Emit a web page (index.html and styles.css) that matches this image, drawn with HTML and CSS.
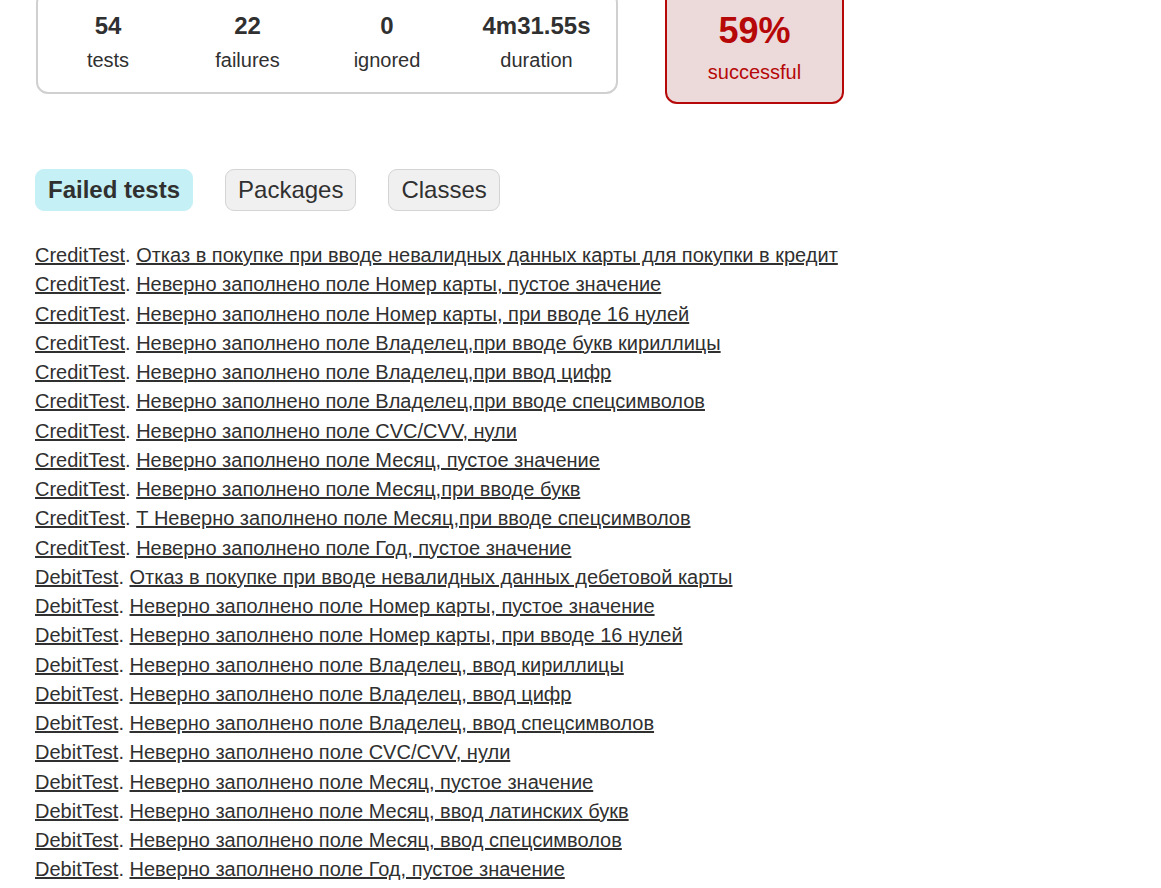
FILE: index.html
```html
<!DOCTYPE html>
<html lang="ru">
<head>
<meta charset="utf-8">
<title>Test results</title>
<link rel="stylesheet" href="styles.css">
</head>
<body>
<div class="content">
  <div class="summary">
    <div class="summary-group">
      <div class="info-box w1"><div class="counter">54</div><p>tests</p></div>
      <div class="info-box w2"><div class="counter">22</div><p>failures</p></div>
      <div class="info-box w3"><div class="counter">0</div><p>ignored</p></div>
      <div class="info-box w4"><div class="counter">4m31.55s</div><p>duration</p></div>
    </div>
    <div class="info-box success-rate failures">
      <div class="percent">59%</div>
      <p>successful</p>
    </div>
  </div>

  <ul class="tab-links">
    <li class="selected"><a href="#"><h2>Failed tests</h2></a></li>
    <li><a href="#">Packages</a></li>
    <li><a href="#">Classes</a></li>
  </ul>

  <ul class="link-list">
    <li><a href="#">CreditTest</a>. <a href="#">Отказ в покупке при вводе невалидных данных карты для покупки в кредит</a></li>
    <li><a href="#">CreditTest</a>. <a href="#">Неверно заполнено поле Номер карты, пустое значение</a></li>
    <li><a href="#">CreditTest</a>. <a href="#">Неверно заполнено поле Номер карты, при вводе 16 нулей</a></li>
    <li><a href="#">CreditTest</a>. <a href="#">Неверно заполнено поле Владелец,при вводе букв кириллицы</a></li>
    <li><a href="#">CreditTest</a>. <a href="#">Неверно заполнено поле Владелец,при ввод цифр</a></li>
    <li><a href="#">CreditTest</a>. <a href="#">Неверно заполнено поле Владелец,при вводе спецсимволов</a></li>
    <li><a href="#">CreditTest</a>. <a href="#">Неверно заполнено поле CVC/CVV, нули</a></li>
    <li><a href="#">CreditTest</a>. <a href="#">Неверно заполнено поле Месяц, пустое значение</a></li>
    <li><a href="#">CreditTest</a>. <a href="#">Неверно заполнено поле Месяц,при вводе букв</a></li>
    <li><a href="#">CreditTest</a>. <a href="#">Т Неверно заполнено поле Месяц,при вводе спецсимволов</a></li>
    <li><a href="#">CreditTest</a>. <a href="#">Неверно заполнено поле Год, пустое значение</a></li>
    <li><a href="#">DebitTest</a>. <a href="#">Отказ в покупке при вводе невалидных данных дебетовой карты</a></li>
    <li><a href="#">DebitTest</a>. <a href="#">Неверно заполнено поле Номер карты, пустое значение</a></li>
    <li><a href="#">DebitTest</a>. <a href="#">Неверно заполнено поле Номер карты, при вводе 16 нулей</a></li>
    <li><a href="#">DebitTest</a>. <a href="#">Неверно заполнено поле Владелец, ввод кириллицы</a></li>
    <li><a href="#">DebitTest</a>. <a href="#">Неверно заполнено поле Владелец, ввод цифр</a></li>
    <li><a href="#">DebitTest</a>. <a href="#">Неверно заполнено поле Владелец, ввод спецсимволов</a></li>
    <li><a href="#">DebitTest</a>. <a href="#">Неверно заполнено поле CVC/CVV, нули</a></li>
    <li><a href="#">DebitTest</a>. <a href="#">Неверно заполнено поле Месяц, пустое значение</a></li>
    <li><a href="#">DebitTest</a>. <a href="#">Неверно заполнено поле Месяц, ввод латинских букв</a></li>
    <li><a href="#">DebitTest</a>. <a href="#">Неверно заполнено поле Месяц, ввод спецсимволов</a></li>
    <li><a href="#">DebitTest</a>. <a href="#">Неверно заполнено поле Год, пустое значение</a></li>
  </ul>
</div>
</body>
</html>
```

FILE: styles.css
```css
html, body {
  margin: 0;
  padding: 0;
  background: #ffffff;
}

body {
  font-family: "Liberation Sans", Arial, sans-serif;
  font-size: 20px;
  color: #303030;
  overflow: hidden;
}

a, a:visited {
  color: #303030;
}

.content {
  padding-left: 35px;
}

.summary {
  display: flex;
  align-items: flex-start;
  margin-top: -12px;
}

.summary-group {
  display: flex;
  margin-left: 1px;
  margin-top: 3px;
  border: 2px solid #d0d0d0;
  border-radius: 12px;
}

.info-box {
  padding: 19px 0;
  text-align: center;
}

.summary-group .info-box {
  padding-bottom: 20px;
}

.info-box p {
  margin: 0;
  line-height: 23px;
}

.w1 { width: 140px; }
.w2 { width: 139px; }
.w3 { width: 140px; }
.w4 { width: 159px; }

.counter {
  font-size: 24px;
  font-weight: bold;
  line-height: 27.6px;
  margin-bottom: 9px;
}

.success-rate {
  width: 175px;
  margin-left: 47px;
  padding-top: 20px;
  padding-bottom: 18px;
  border: 2px solid #b60808;
  border-radius: 12px;
  background-color: #ecdada;
  color: #b60808;
}

.percent {
  font-size: 36px;
  font-weight: bold;
  line-height: 41.4px;
  margin-bottom: 10px;
}

.tab-links {
  display: flex;
  list-style: none;
  padding: 0;
  margin: 65px 0 0 0;
}

.tab-links li {
  padding: 6px 12px;
  margin-right: 32px;
  border: 1px solid #d4d4d4;
  border-radius: 9px;
  background-color: #f0f0f0;
}

.tab-links li.selected {
  background-color: #c5f0f5;
  border-color: #c5f0f5;
}

.tab-links a {
  display: block;
  font-size: 24px;
  line-height: 27.6px;
  text-decoration: none;
  color: #303030;
}

.tab-links h2 {
  margin: 0;
  font-size: 24px;
  font-weight: bold;
  line-height: 27.6px;
}

.link-list {
  list-style: none;
  padding: 0;
  margin: 33px 0 0 0;
}

.link-list li {
  line-height: 23px;
  margin-bottom: 6.25px;
  white-space: nowrap;
}
```
